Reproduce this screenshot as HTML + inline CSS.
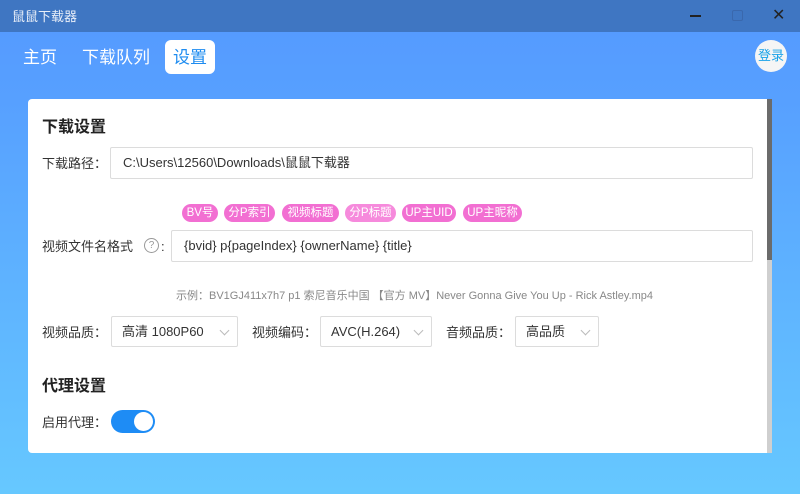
<!DOCTYPE html><html><head><meta charset="utf-8"><style>
*{margin:0;padding:0;box-sizing:border-box}
body{width:800px;height:494px;overflow:hidden;font-family:"Liberation Sans","Noto Sans CJK SC",sans-serif;background:linear-gradient(#559bff 32px,#57a0ff 100px,#66c8ff 494px);position:relative;line-height:1.2}
.tb{position:absolute;left:0;top:0;width:800px;height:32px;background:#3f76c2;color:#e8eef8;font-size:13px}
.a{position:absolute;white-space:nowrap}
.nav{font-size:17px;color:#fff}
.card{position:absolute;left:28px;top:99px;width:744px;height:354px;background:#fff;border-radius:4px 0 0 4px}
.lbl{font-size:13px;color:#333}
.h{font-size:16px;font-weight:bold;color:#222}
.inp{position:absolute;border:1px solid #dcdcdc;border-radius:2px;font-size:13px;color:#333;padding-left:12px;display:flex;align-items:center;background:#fff}
.tag{position:absolute;top:204px;height:18px;border-radius:9px;background:#f26fd2;color:#fff;font-size:11.5px;text-align:center;line-height:18px}
.sel{position:absolute;top:316px;height:31px;border:1px solid #dcdcdc;border-radius:2px;font-size:13px;color:#333;padding-left:10px;line-height:29px}
.sel i{position:absolute;right:9px;top:10px;width:7px;height:7px;border-right:1px solid #bbb;border-bottom:1px solid #bbb;transform:rotate(45deg)}
</style></head><body>
<div class="tb"><span class="a" style="left:12px;top:9px">鼠鼠下载器</span>
<div class="a" style="left:690px;top:15px;width:11px;height:1.5px;background:#222"></div>
<div class="a" style="left:732px;top:10px;width:11px;height:11px;border:1px solid #3a68ad;border-radius:2px"></div>
<span class="a" style="left:772px;top:6px;font-size:16px;color:#222">✕</span></div>
<span class="a nav" style="left:23px;top:48px">主页</span>
<span class="a nav" style="left:82px;top:48px">下载队列</span>
<div class="a" style="left:165px;top:40px;width:50px;height:34px;background:#fff;border-radius:6px;color:#1e8cf0;font-size:17px;text-align:center;line-height:35px">设置</div>
<div class="a" style="left:755px;top:40px;width:32px;height:32px;background:#f5f5f5;border-radius:50%;color:#1aa3e8;font-size:13px;text-align:center;line-height:32px">登录</div>
<div class="card"></div>
<div class="a" style="left:767px;top:99px;width:5px;height:354px;background:#cfcfcf"></div>
<div class="a" style="left:767px;top:99px;width:5px;height:161px;background:#6b6b6b"></div>
<span class="a h" style="left:42px;top:118px">下载设置</span>
<span class="a lbl" style="left:42px;top:156px">下载路径：</span>
<div class="inp" style="left:110px;top:147px;width:643px;height:32px">C:\Users\12560\Downloads\鼠鼠下载器</div>
<div class="tag" style="left:182px;width:36px">BV号</div>
<div class="tag" style="left:224px;width:51px">分P索引</div>
<div class="tag" style="left:282px;width:57px">视频标题</div>
<div class="tag" style="left:345px;width:51px;background:#f68adc">分P标题</div>
<div class="tag" style="left:402px;width:54px">UP主UID</div>
<div class="tag" style="left:463px;width:59px">UP主昵称</div>
<span class="a lbl" style="left:42px;top:239px">视频文件名格式</span>
<div class="a" style="left:144px;top:238px;width:15px;height:15px;border:1px solid #999;border-radius:50%;font-size:10px;color:#999;text-align:center;line-height:13px">?</div>
<span class="a lbl" style="left:161px;top:239px">:</span>
<div class="inp" style="left:171px;top:230px;width:582px;height:32px">{bvid} p{pageIndex} {ownerName} {title}</div>
<span class="a" style="left:176px;top:290px;font-size:11px;color:#888">示例：BV1GJ411x7h7 p1 索尼音乐中国 【官方 MV】Never Gonna Give You Up - Rick Astley.mp4</span>
<span class="a lbl" style="left:42px;top:325px">视频品质：</span>
<div class="sel" style="left:111px;width:127px">高清 1080P60<i></i></div>
<span class="a lbl" style="left:252px;top:325px">视频编码：</span>
<div class="sel" style="left:320px;width:112px">AVC(H.264)<i></i></div>
<span class="a lbl" style="left:446px;top:325px">音频品质：</span>
<div class="sel" style="left:515px;width:84px">高品质<i></i></div>
<span class="a h" style="left:42px;top:377px">代理设置</span>
<span class="a lbl" style="left:42px;top:415px">启用代理：</span>
<div class="a" style="left:111px;top:410px;width:44px;height:23px;border-radius:12px;background:#1e8cf5"><div style="position:absolute;right:2px;top:2px;width:19px;height:19px;border-radius:50%;background:#fff"></div></div>
</body></html>
